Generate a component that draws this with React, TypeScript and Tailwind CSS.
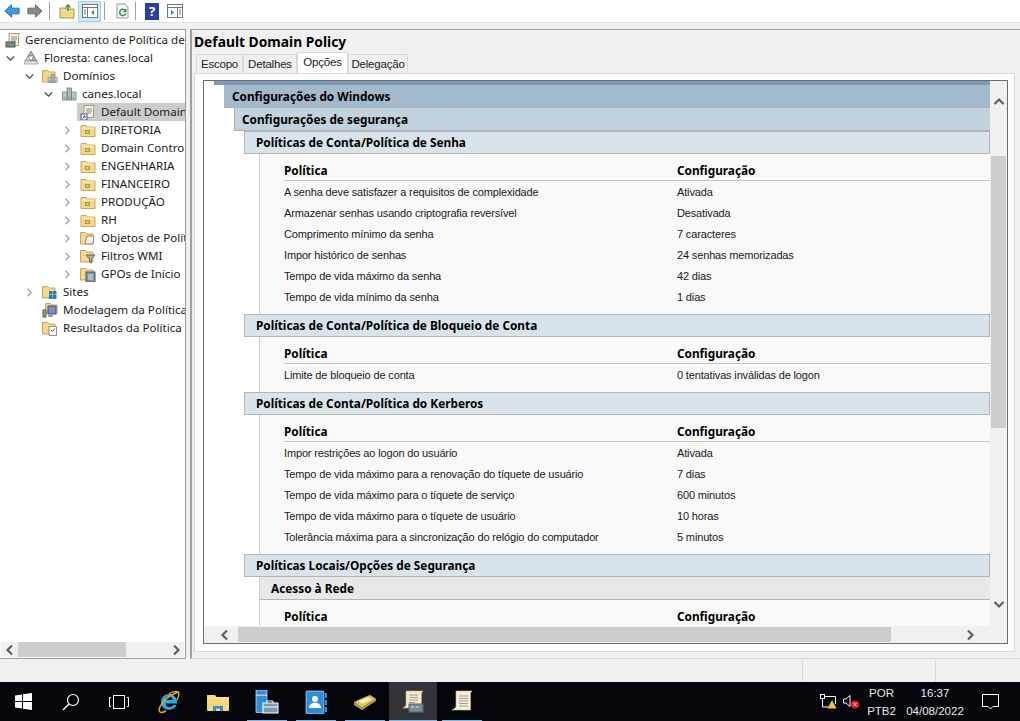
import type { ReactNode } from "react";

const uiFont = "font-['Noto_Sans',sans-serif]";

// Tree icons
const Folder = ({ children }: { children?: ReactNode }) => (
  <svg width="16" height="16" viewBox="0 0 16 16" className="shrink-0">
    <path d="M1 3.5h5l1.500 1.500H15v9.500H1z" fill="#f5d98b" stroke="#c9a757" />
    <path d="M2 6h12" stroke="#fdf1c4" />
    {children}
  </svg>
);

const OuIcon = () => (
  <Folder>
    <rect x="5" y="8" width="5" height="4" fill="#b39a3e" />
    <rect x="6.5" y="9.2" width="2" height="1.5" fill="#f3e7a8" />
  </Folder>
);

const Servers = ({ inFolder }: { inFolder?: boolean }) => {
  const bars = (
    <g>
      <rect x="6" y="2" width="4.5" height="12" fill="#a9b8b4" stroke="#66767a" strokeWidth="0.7" />
      <rect x="1.5" y="6" width="4.5" height="8" fill="#bcc8c4" stroke="#66767a" strokeWidth="0.7" />
      <rect x="10.5" y="6" width="4.5" height="8" fill="#bcc8c4" stroke="#66767a" strokeWidth="0.7" />
      <path d="M3 12h1M8 12h1M12 12h1" stroke="#35b04a" strokeWidth="1.5" />
    </g>
  );
  if (inFolder)
    return (
      <svg width="16" height="16" viewBox="0 0 16 16" className="shrink-0">
        <path d="M0.5 2.5h5l1.500 1.500h6v10H.5z" fill="#f5d98b" stroke="#c9a757" />
        <g transform="translate(5 5) scale(.68)">{bars}</g>
      </svg>
    );
  return (
    <svg width="16" height="16" viewBox="0 0 16 16" className="shrink-0">
      {bars}
    </svg>
  );
};

const Scroll = ({ badge }: { badge?: "gpm" | "link" }) => (
  <svg width="16" height="16" viewBox="0 0 16 16" className="shrink-0">
    <path d="M4 1.5h10.500c-1 1-1 2-1 3v9H2.500c1-1 1.500-2 1.500-3z" fill="#f6f0d6" stroke="#a59d80" />
    <path d="M6 5h6M6 7h6M6 9h5" stroke="#8f8f8f" />
    {badge === "gpm" && <rect x="1" y="10" width="9" height="5" fill="#7c8a93" stroke="#4e5960" />}
    {badge === "link" && (
      <g>
        <rect x="1" y="10" width="6" height="6" fill="#fff" stroke="#3f51a8" />
        <path d="M2.5 14.5l2.500-2.500M3.5 12H5v1.500" stroke="#2336a5" fill="none" />
      </g>
    )}
  </svg>
);

const Forest = () => (
  <svg width="16" height="16" viewBox="0 0 16 16" className="shrink-0">
    <path d="M8 1l3 5H5z" fill="#b3b3b3" stroke="#6f6f6f" strokeWidth=".7" />
    <path d="M5 6l3 5H2z" fill="#d4d4d4" stroke="#6f6f6f" strokeWidth=".7" />
    <path d="M11 6l3 5H8z" fill="#a7a7a7" stroke="#6f6f6f" strokeWidth=".7" />
    <path d="M2 11h12l1 3H1z" fill="#e5e5e5" stroke="#8a8a8a" strokeWidth=".7" />
  </svg>
);

const PolicyFolder = ({ kind }: { kind: "doc" | "filter" | "starter" }) => (
  <svg width="16" height="16" viewBox="0 0 16 16" className="shrink-0">
    <path d="M.5 2.500h5L7 4h6v10H.5z" fill="#f5d98b" stroke="#c9a757" />
    {kind === "doc" && <path d="M7 6h7l-1 8H5z" fill="#f3f1e7" stroke="#8a8a80" />}
    {kind === "filter" && <path d="M6 7h9l-3.500 4v4l-2-1v-3z" fill="#9fb0ba" stroke="#5c6a72" />}
    {kind === "starter" && <rect x="6" y="6" width="9" height="10" fill="#7f94a8" stroke="#4a5a68" />}
    {kind === "starter" && <path d="M8 9h5M8 11h5M8 13h5" stroke="#dfe6ec" />}
  </svg>
);

const SitesIcon = () => (
  <svg width="16" height="16" viewBox="0 0 16 16" className="shrink-0">
    <path d="M.5 2.500h5L7 4h6v10H.5z" fill="#f5d98b" stroke="#c9a757" />
    <path d="M7 7h3.500v3.500H7zM11 7h3.500v3.500H11zM7 11h3.500v4H7zM11 11h3.500v4H11z" fill="#1f7fc4" />
  </svg>
);

const ModelIcon = () => (
  <svg width="16" height="16" viewBox="0 0 16 16" className="shrink-0">
    <path d="M3.500 1.500h5L10 3h5v8H3.500z" fill="#f5d98b" stroke="#c9a757" />
    <rect x="6" y="4" width="8" height="8" fill="#7a8fc0" stroke="#3c4f88" />
    <rect x="1" y="8" width="3" height="7" fill="#8fa08f" stroke="#566356" />
    <rect x="6" y="12" width="5" height="3" fill="#9c9cac" />
  </svg>
);

const ResultsIcon = () => (
  <svg width="16" height="16" viewBox="0 0 16 16" className="shrink-0">
    <path d="M.5 2.500h5L7 4h6v10H.5z" fill="#f5d98b" stroke="#c9a757" />
    <path d="M7 6.500h7.500v9H7z" fill="#fff" stroke="#8f8f8f" />
    <path d="M9 10l1.500 1.500L13 8.500" stroke="#3c7a4a" fill="none" />
  </svg>
);

const ChevronOpen = () => (
  <svg width="9" height="9" viewBox="0 0 9 9" className="shrink-0">
    <path d="M.8 2.500L4.500 6.200 8.200 2.500" fill="none" stroke="#4d4d4d" strokeWidth="1.3" />
  </svg>
);

const ChevronClosed = () => (
  <svg width="9" height="9" viewBox="0 0 9 9" className="shrink-0">
    <path d="M2.500.8L6.200 4.500 2.500 8.200" fill="none" stroke="#a6a6a6" strokeWidth="1.3" />
  </svg>
);

type TreeItem = { label: string; indent: number; chevron?: "open" | "closed"; icon: ReactNode; selected?: boolean };

const tree: TreeItem[] = [
  { label: "Gerenciamento de Política de", indent: 0, icon: <Scroll badge="gpm" /> },
  { label: "Floresta: canes.local", indent: 1, chevron: "open", icon: <Forest /> },
  { label: "Domínios", indent: 2, chevron: "open", icon: <Servers inFolder /> },
  { label: "canes.local", indent: 3, chevron: "open", icon: <Servers /> },
  { label: "Default Domain", indent: 4, icon: <Scroll badge="link" />, selected: true },
  { label: "DIRETORIA", indent: 4, chevron: "closed", icon: <OuIcon /> },
  { label: "Domain Contro", indent: 4, chevron: "closed", icon: <OuIcon /> },
  { label: "ENGENHARIA", indent: 4, chevron: "closed", icon: <OuIcon /> },
  { label: "FINANCEIRO", indent: 4, chevron: "closed", icon: <OuIcon /> },
  { label: "PRODUÇÃO", indent: 4, chevron: "closed", icon: <OuIcon /> },
  { label: "RH", indent: 4, chevron: "closed", icon: <OuIcon /> },
  { label: "Objetos de Polít", indent: 4, chevron: "closed", icon: <PolicyFolder kind="doc" /> },
  { label: "Filtros WMI", indent: 4, chevron: "closed", icon: <PolicyFolder kind="filter" /> },
  { label: "GPOs de Início", indent: 4, chevron: "closed", icon: <PolicyFolder kind="starter" /> },
  { label: "Sites", indent: 2, chevron: "closed", icon: <SitesIcon /> },
  { label: "Modelagem da Política", indent: 2, icon: <ModelIcon /> },
  { label: "Resultados da Política", indent: 2, icon: <ResultsIcon /> },
];

const ScrollChevron = ({ dir }: { dir: "up" | "down" | "left" | "right" }) => {
  const d = {
    up: "M1.500 8L6 3.500 10.500 8",
    down: "M1.500 4L6 8.500 10.500 4",
    left: "M8 1.500L3.500 6 8 10.500",
    right: "M4 1.500L8.500 6 4 10.500",
  }[dir];
  return (
    <svg width="12" height="12" viewBox="0 0 12 12" className="shrink-0">
      <path d={d} fill="none" stroke="#606060" strokeWidth="2.2" />
    </svg>
  );
};

// Report rows
type Section = {
  title: string;
  sub?: string;
  rows: [string, string][];
};

const sections: Section[] = [
  {
    title: "Políticas de Conta/Política de Senha",
    rows: [
      ["A senha deve satisfazer a requisitos de complexidade", "Ativada"],
      ["Armazenar senhas usando criptografia reversível", "Desativada"],
      ["Comprimento mínimo da senha", "7 caracteres"],
      ["Impor histórico de senhas", "24 senhas memorizadas"],
      ["Tempo de vida máximo da senha", "42 dias"],
      ["Tempo de vida mínimo da senha", "1 dias"],
    ],
  },
  {
    title: "Políticas de Conta/Política de Bloqueio de Conta",
    rows: [["Limite de bloqueio de conta", "0 tentativas inválidas de logon"]],
  },
  {
    title: "Políticas de Conta/Política do Kerberos",
    rows: [
      ["Impor restrições ao logon do usuário", "Ativada"],
      ["Tempo de vida máximo para a renovação do tíquete de usuário", "7 dias"],
      ["Tempo de vida máximo para o tíquete de serviço", "600 minutos"],
      ["Tempo de vida máximo para o tíquete de usuário", "10 horas"],
      ["Tolerância máxima para a sincronização do relógio do computador", "5 minutos"],
    ],
  },
  { title: "Políticas Locais/Opções de Segurança", sub: "Acesso à Rede", rows: [] },
];

const reportFont = "font-['Liberation_Sans',sans-serif] text-[11px] tracking-[-0.15px] text-[#1a1a1a]";
const headFont = "font-['Noto_Sans',sans-serif] text-[11.8px] font-bold text-black";
const tabFont = "font-['Liberation_Sans',sans-serif] text-[11.5px] tracking-[-0.2px] text-[#222]";

const PolicyHeader = () => (
  <div className={`flex h-[24px] items-center border-b border-[#c4c4c4] ml-[24px] pt-[4px] ${headFont}`}>
    <span className="w-[393px]">Política</span>
    <span>Configuração</span>
  </div>
);

const ReportSection = ({ section }: { section: Section }) => (
  <div>
    <div className={`flex h-[23px] items-center border border-[#b5b5b5] ml-[40px] pl-[11px] pt-[1px] bg-[#d9e4ea] ${headFont}`}>
      {section.title}
    </div>
    <div className="ml-[55px] border-l border-[#d0d0d0] bg-[#f9f9f9]">
      {section.sub && (
        <div className={`flex h-[23px] items-center bg-[#e8e8e8] border-b border-[#b5b5b5] pl-[11px] pt-[1px] ${headFont}`}>
          {section.sub}
        </div>
      )}
      <div className="pt-[3px] pb-[6px]">
        <PolicyHeader />
        <div className="pt-[1px]">
          {section.rows.map(([name, value]) => (
            <div key={name} className={`flex h-[21px] items-center ml-[24px] ${reportFont}`}>
              <span className="w-[393px]">{name}</span>
              <span>{value}</span>
            </div>
          ))}
        </div>
      </div>
    </div>
  </div>
);

const Tab = ({ label, active, width }: { label: string; active?: boolean; width: string }) =>
  active ? (
    <div className={`${width} h-[21px] flex justify-center pt-[1px] bg-white border border-b-0 border-[#d9d9d9] ${tabFont}`}>
      {label}
    </div>
  ) : (
    <div className={`${width} h-[19px] flex justify-center items-center pt-[1px] bg-[#f0f0f0] border border-b-0 border-[#d9d9d9] ${tabFont}`}>
      {label}
    </div>
  );

const Underlined = ({ children, active }: { children: ReactNode; active?: boolean }) => (
  <div className={`flex h-full flex-col items-center justify-center relative ${active ? "bg-[#33343a] w-[48px]" : "w-[49px]"}`}>
    {children}
    <div className={`absolute bottom-0 h-[1px] bg-[#76b9ed] ${active ? "w-[48px]" : "w-[40px]"}`} />
  </div>
);

export default function App() {
  return (
    <div className={`flex h-[721px] w-[1020px] flex-col overflow-hidden bg-[#f0f0f0] ${uiFont}`}>
      {/* Toolbar */}
      <div className="flex h-[23px] items-center bg-white border-b border-[#e3e3e3] pl-[4px]">
        <svg width="17" height="16" viewBox="0 0 18 16">
          <path d="M8 1.500L1 8l7 6.500V11h8V5H8z" fill="#3a9be8" stroke="#1c6cb5" />
        </svg>
        <svg width="17" height="16" viewBox="0 0 18 16" className="ml-[5px]">
          <path d="M10 1.500L17 8l-7 6.500V11H2V5h8z" fill="#8a8a8a" stroke="#6b6b6b" />
        </svg>
        <div className="ml-[6px] h-[18px] w-[1px] bg-[#a0a0a0]" />
        <svg width="16" height="16" viewBox="0 0 16 16" className="ml-[9px]">
          <path d="M1 5h5l1 1h8v9H1z" fill="#f2d98a" stroke="#b3953f" />
          <path d="M9 8V2.500M6.500 4.500L9 2l2.500 2.500" stroke="#2f9a46" strokeWidth="1.5" fill="none" />
        </svg>
        <div className="ml-[3px] flex h-[21px] w-[23px] items-center justify-center bg-[#cce8ff] border border-[#99d1ff]">
          <svg width="16" height="14" viewBox="0 0 16 14">
            <rect x=".5" y=".5" width="15" height="13" fill="#fff" stroke="#777" />
            <path d="M.5 3.500h15M5.500 3.500v10M2 6h2M2 8h2M2 10h2" stroke="#777" />
            <path d="M12 6v5L9 8.500z" fill="#2f9a46" />
          </svg>
        </div>
        <div className="ml-[3px] h-[18px] w-[1px] bg-[#a0a0a0]" />
        <svg width="15" height="16" viewBox="0 0 15 16" className="ml-[10px]">
          <path d="M2 1h8l3 3v11H2z" fill="#f7f7f7" stroke="#9a9a9a" />
          <path d="M10.500 7.500a3.200 3.200 0 1 0 .4 3M10.800 6v2.500H8.500" fill="none" stroke="#2f9a46" strokeWidth="1.5" />
        </svg>
        <div className="ml-[5px] h-[18px] w-[1px] bg-[#a0a0a0]" />
        <div className="ml-[9px] flex h-[17px] w-[14px] items-center justify-center bg-[#2c3f9e] text-[13px] font-bold leading-none text-white">?</div>
        <svg width="16" height="14" viewBox="0 0 16 14" className="ml-[8px]">
          <rect x=".5" y=".5" width="15" height="13" fill="#fff" stroke="#777" />
          <path d="M.5 3.500h15M10.500 3.500v10M12 6h2M12 8h2M12 10h2" stroke="#777" />
          <path d="M4 6v5l3-2.500z" fill="#2f9a46" />
        </svg>
      </div>

      {/* Panes */}
      <div className="flex h-[636px] pt-[6px]">
        {/* Tree pane */}
        <div className="flex w-[186px] shrink-0 flex-col border-r border-b border-t border-[#9a9a9a] bg-white">
          <div className="min-h-0 flex-1 overflow-hidden pt-[1px] text-[11.6px]">
            {tree.map((item) => (
              <div key={item.label} className="flex h-[18px] items-center">
                <div className={`flex h-[18px] w-full items-center ${item.indent === 0 ? "pl-[5px]" : item.indent === 1 ? "pl-[6px]" : item.indent === 2 ? "pl-[25px]" : item.indent === 3 ? "pl-[44px]" : "pl-[63px]"}`}>
                  {item.indent === 0 ? null : (
                    <div className="flex w-[17px] shrink-0 items-center justify-start">
                      {item.chevron === "open" && <ChevronOpen />}
                      {item.chevron === "closed" && <ChevronClosed />}
                    </div>
                  )}
                  <div className={`flex min-w-0 flex-1 items-center h-[18px] ${item.selected ? "bg-[#cccccc] -ml-[3px] pl-[3px]" : ""}`}>
                    {item.icon}
                    <span className={`whitespace-nowrap text-[#1a1a1a] ${item.indent === 0 ? "ml-[4px]" : "ml-[5px]"}`}>{item.label}</span>
                  </div>
                </div>
              </div>
            ))}
          </div>
          <div className="mx-[1px] mb-[1px] flex h-[15px] items-center bg-[#f0f0f0]">
            <div className="flex w-[17px] justify-center"><ScrollChevron dir="left" /></div>
            <div className="h-full w-[108px] bg-[#cdcdcd]" />
            <div className="flex-1" />
            <div className="flex w-[17px] justify-center"><ScrollChevron dir="right" /></div>
          </div>
        </div>

        {/* Result pane */}
        <div className="ml-[4px] flex min-w-0 flex-1 flex-col border-l-2 border-t border-b border-[#a0a0a0] border-b-[#d9d9d9] bg-[#f0f0f0] pl-[2px] pr-[5px]">
          <div className="flex h-[23px] items-center pt-[1px] text-[13.8px] leading-[18px] font-bold text-black">Default Domain Policy</div>
          <div className="flex h-[20px] items-end pl-[2px]">
            <Tab label="Escopo" width="w-[47px]" />
            <Tab label="Detalhes" width="w-[54px]" />
            <Tab label="Opções" width="w-[51px]" active />
            <Tab label="Delegação" width="w-[60px]" />
          </div>
          <div className="flex min-h-0 flex-1 mb-[6px] flex-col border border-[#d9d9d9] bg-white pl-[8px] pr-[6px] pt-[6px] pb-[7px]">
            <div className="flex min-h-0 flex-1 flex-col border border-[#6d6d6d] overflow-hidden">
              <div className="flex min-h-0 flex-1">
                <div className="min-w-0 flex-1 overflow-hidden bg-white">
                  <div className="ml-[10px] h-[4px] bg-[#7a9ab5]" />
                  <div className={`ml-[20px] flex h-[23px] items-center border-b border-[#b0b0b0] bg-[#a3b9cc] pl-[8px] pt-[1px] ${headFont}`}>Configurações do Windows</div>
                  <div className={`ml-[30px] flex h-[23px] items-center border-b border-l border-[#b0b0b0] bg-[#c0d3de] pl-[7px] pt-[1px] ${headFont}`}>Configurações de segurança</div>
                  {sections.map((section) => (
                    <ReportSection key={section.title} section={section} />
                  ))}
                </div>
                <div className="flex w-[17px] shrink-0 flex-col items-center bg-[#f0f0f0]">
                  <div className="flex h-[29px] w-full items-end justify-center pb-[2px]"><ScrollChevron dir="up" /></div>
                  <div className="mt-[46px] h-[272px] w-[15px] bg-[#cdcdcd]" />
                  <div className="flex-1" />
                  <div className="mb-[16px] flex justify-center"><ScrollChevron dir="down" /></div>
                </div>
              </div>
              <div className="flex h-[17px] shrink-0 items-center bg-[#f0f0f0]">
                <div className="flex w-[34px] justify-end pr-[7px]"><ScrollChevron dir="left" /></div>
                <div className="h-[15px] w-[653px] bg-[#cdcdcd]" />
                <div className="flex flex-1 justify-end pr-[31px]"><ScrollChevron dir="right" /></div>
              </div>
            </div>
          </div>
        </div>
      </div>

      {/* Status bar */}
      <div className="flex h-[23px] bg-[#f0f0f0] pt-[2px]">
        <div className="h-[21px] w-[803px] border-r border-[#d9d9d9]" />
        <div className="h-[21px] w-[133px] border-r border-[#d9d9d9]" />
      </div>

      {/* Taskbar */}
      <div className="flex h-[39px] shrink-0 items-center bg-[#05060b] text-white">
        <div className="flex w-[47px] items-center justify-center">
          <svg width="17" height="17" viewBox="0 0 17 17">
            <path d="M0 2.500l7-1v6.500H0zM8 1.300L17 0v8H8zM0 9h7v6.500l-7-1zM8 9h9v8l-9-1.300z" fill="#fff" />
          </svg>
        </div>
        <div className="flex w-[48px] items-center justify-center">
          <svg width="18" height="18" viewBox="0 0 18 18">
            <circle cx="11" cy="7" r="5.500" fill="none" stroke="#fff" strokeWidth="1.200" />
            <path d="M7 11l-6 6" stroke="#fff" strokeWidth="1.500" />
          </svg>
        </div>
        <div className="flex w-[48px] items-center justify-center">
          <svg width="20" height="14" viewBox="0 0 20 14">
            <rect x="4.500" y=".5" width="11" height="13" fill="none" stroke="#fff" />
            <path d="M2 2.500H.5v9H2M18 2.500h1.500v9H18" fill="none" stroke="#fff" />
          </svg>
        </div>
        <div className="flex w-[50px] items-center justify-center pl-[2px]">
          <svg width="24" height="24" viewBox="0 0 24 24">
            <path d="M4 12a8 8 0 0 1 16 0v1.500H8.500c.3 4 5.500 4.500 8 1.500h3.200c-3 7-15.700 6.500-15.700-3zM8.500 10h7a3.500 3.500 0 0 0-7 0z" fill="#2aa9e8" />
            <path d="M3 22c-3-3 4-15 18-20-3-1-7 0-9 2M21 2c2 3 0 6-1 8M3 22c1 1 4 0 6-1" fill="none" stroke="#e3a81c" strokeWidth="1.500" />
          </svg>
        </div>
        <div className="flex w-[49px] items-center justify-center">
          <svg width="22" height="18" viewBox="0 0 22 18">
            <path d="M0 2h8l1.500 2H22v13a1 1 0 0 1-1 1H1a1 1 0 0 1-1-1z" fill="#f6d675" />
            <path d="M0 5h22" stroke="#fbeab0" />
            <path d="M6 18v-5h10v5h-3v-2.500H9V18z" fill="#2a8fd8" />
          </svg>
        </div>
        <Underlined>
          <svg width="24" height="24" viewBox="0 0 24 24">
            <rect x="1" y="0" width="11" height="5" fill="#2a8fd8" stroke="#fff" strokeWidth=".6" />
            <rect x="1" y="5.500" width="11" height="17" fill="#2a8fd8" stroke="#fff" strokeWidth=".6" />
            <rect x="8" y="13" width="15" height="10" fill="#7d99ad" stroke="#fff" />
            <path d="M12 13v-2h6v2M8 17h15" fill="none" stroke="#fff" />
          </svg>
        </Underlined>
        <Underlined>
          <svg width="24" height="24" viewBox="0 0 24 24">
            <rect x="2" y="1" width="18" height="23" rx="1" fill="#2a8fd8" stroke="#e8f3fb" strokeWidth=".6" />
            <circle cx="11" cy="9" r="3" fill="#fff" />
            <path d="M5 18c0-7 12-7 12 0z" fill="#fff" />
            <path d="M21 3h2v5h-2zM21 10h2v5h-2zM21 17h2v5h-2z" fill="#2a8fd8" />
          </svg>
        </Underlined>
        <Underlined>
          <svg width="24" height="18" viewBox="0 0 24 18">
            <path d="M1 9L17 2l6 4-14 9z" fill="#d9c35c" stroke="#8e7c2a" strokeWidth=".6" />
            <path d="M5 8l10-4 4 2.500L9 11z" fill="#f3ecc0" />
            <path d="M1 9v3l8 5 14-9V6L9 15z" fill="#b7a142" />
          </svg>
        </Underlined>
        <Underlined active>
          <svg width="24" height="24" viewBox="0 0 24 24">
            <path d="M5 1h17c-1 1-1.500 2-1.500 3v14H2c1.500-1 3-2 3-3z" fill="#f5ecc8" stroke="#b8ac83" strokeWidth=".6" />
            <path d="M8 5h9M8 7.500h9M8 10h9M8 12.500h6" stroke="#9b9b9b" />
            <rect x="8" y="14" width="14" height="8" fill="#7c8d98" stroke="#566570" />
            <path d="M10 17h3M15 17h3" stroke="#d6dde2" />
          </svg>
        </Underlined>
        <div className="flex h-full w-[50px] flex-col items-center justify-center relative">
          <svg width="22" height="24" viewBox="0 0 22 24">
            <path d="M5 1h16c-1 1-1.500 2-1.500 3v16H1c2-1 4-2 4-4z" fill="#f7efcf" stroke="#c9bd92" strokeWidth=".6" />
            <path d="M8 6h9M8 8.500h9M8 11h9M8 13.500h9M8 16h9" stroke="#9b9b9b" />
          </svg>
          <div className="absolute bottom-0 h-[1px] w-[40px] bg-[#76b9ed]" />
        </div>
        <div className="flex-1" />
        {/* Tray */}
        <svg width="17" height="15" viewBox="0 0 17 15">
          <rect x=".5" y=".5" width="4" height="4" fill="none" stroke="#fff" />
          <path d="M2.500 4.500V13h6M4.500 2.500H15.500V10" fill="none" stroke="#fff" />
          <path d="M12 6l4.500 8.500h-9z" fill="#f7c325" />
        </svg>
        <svg width="17" height="15" viewBox="0 0 17 15" className="ml-[6px]">
          <path d="M.5 5h2.500L7 1.500v11L3 9H.5z" fill="none" stroke="#fff" />
          <circle cx="12" cy="10.500" r="4" fill="#e81123" />
          <path d="M10.300 8.800l3.400 3.400M13.700 8.800l-3.400 3.400" stroke="#fff" />
        </svg>
        <div className="ml-[8px] flex w-[27px] flex-col items-center pt-[1px] font-['Liberation_Sans',sans-serif] text-[11.5px] leading-[18px] text-[#e8e8e8]">
          <span>POR</span>
          <span>PTB2</span>
        </div>
        <div className="ml-[9px] flex w-[62px] flex-col items-center pt-[1px] font-['Liberation_Sans',sans-serif] text-[11.5px] leading-[18px] text-[#e8e8e8]">
          <span>16:37</span>
          <span>04/08/2022</span>
        </div>
        <div className="ml-[2px] flex w-[49px] items-center justify-center pr-[4px]">
          <svg width="17" height="16" viewBox="0 0 17 16">
            <path d="M.5.5h16v12h-5.500l-2.500 2.500-2.500-2.500H.5z" fill="none" stroke="#fff" />
          </svg>
        </div>
        <div className="w-[3px]" />
      </div>
    </div>
  );
}
